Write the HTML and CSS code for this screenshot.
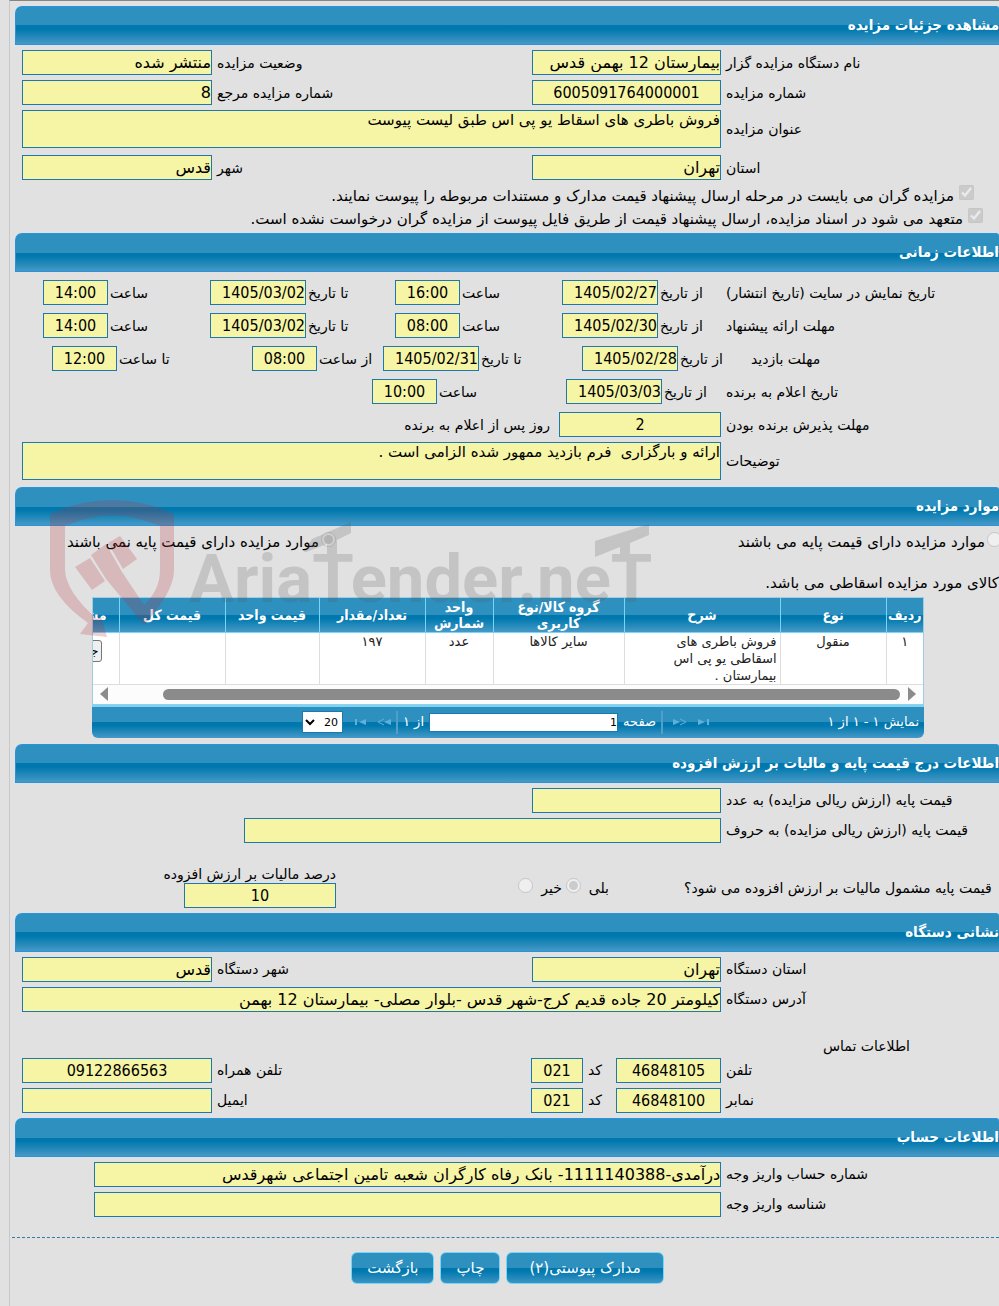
FILE: index.html
```
<!DOCTYPE html>
<html lang="fa" dir="rtl">
<head>
    <meta charset="UTF-8">
    <meta name="viewport" content="width=device-width, initial-scale=1.0">
    <title>مشاهده جزئیات مزایده</title>
    <link rel="stylesheet" href="styles.css">
</head>
<body>
<form class="page">

    <h2 class="head">مشاهده جزئیات مزایده</h2>
    <div class="section">
        <div class="row">
            <label for="org">نام دستگاه مزایده گزار</label>
            <input type="text" class="input" id="org" value="بیمارستان 12 بهمن قدس" readonly>
            <label for="status">وضعیت مزایده</label>
            <input type="text" class="input" id="status" value="منتشر شده" readonly>
        </div>
        <div class="row">
            <label for="number">شماره مزایده</label>
            <input type="text" class="input num" id="number" value="6005091764000001" readonly>
            <label for="ref">شماره مزایده مرجع</label>
            <input type="text" class="input" id="ref" value="8" readonly>
        </div>
        <div class="row row-wide row-subject">
            <label for="subject">عنوان مزایده</label>
            <textarea class="input area" id="subject" readonly>فروش باطری های اسقاط یو پی اس طبق لیست پیوست</textarea>
        </div>
        <div class="row">
            <label for="province">استان</label>
            <input type="text" class="input" id="province" value="تهران" readonly>
            <label for="city">شهر</label>
            <input type="text" class="input" id="city" value="قدس" readonly>
        </div>
        <div class="checks">
            <div class="check">
                <input type="checkbox" id="docs" checked disabled>
                <label for="docs">مزایده گران می بایست در مرحله ارسال پیشنهاد قیمت مدارک و مستندات مربوطه را پیوست نمایند.</label>
            </div>
            <div class="check check-2">
                <input type="checkbox" id="commit" checked disabled>
                <label for="commit">متعهد می شود در اسناد مزایده، ارسال پیشنهاد قیمت از طریق فایل پیوست از مزایده گران درخواست نشده است.</label>
            </div>
        </div>
    </div>

    <h2 class="head">اطلاعات زمانی</h2>
    <div class="section times">
        <div class="time-row">
            <span class="time-title">تاریخ نمایش در سایت (تاریخ انتشار)</span>
            <div class="field"><label for="d1">از تاریخ</label><input type="text" class="input date" id="d1" value="1405/02/27" readonly></div>
            <div class="field"><label for="h1">ساعت</label><input type="text" class="input hour" id="h1" value="16:00" readonly></div>
            <div class="field"><label for="d2">تا تاریخ</label><input type="text" class="input date" id="d2" value="1405/03/02" readonly></div>
            <div class="field"><label for="h2">ساعت</label><input type="text" class="input hour" id="h2" value="14:00" readonly></div>
        </div>
        <div class="time-row">
            <span class="time-title">مهلت ارائه پیشنهاد</span>
            <div class="field"><label for="d3">از تاریخ</label><input type="text" class="input date" id="d3" value="1405/02/30" readonly></div>
            <div class="field"><label for="h3">ساعت</label><input type="text" class="input hour" id="h3" value="08:00" readonly></div>
            <div class="field"><label for="d4">تا تاریخ</label><input type="text" class="input date" id="d4" value="1405/03/02" readonly></div>
            <div class="field"><label for="h4">ساعت</label><input type="text" class="input hour" id="h4" value="14:00" readonly></div>
        </div>
        <div class="time-row visit">
            <span class="time-title">مهلت بازدید</span>
            <div class="field"><label for="d5">از تاریخ</label><input type="text" class="input date" id="d5" value="1405/02/28" readonly></div>
            <div class="field"><label for="d6">تا تاریخ</label><input type="text" class="input date" id="d6" value="1405/02/31" readonly></div>
            <div class="field"><label for="h5">از ساعت</label><input type="text" class="input hour" id="h5" value="08:00" readonly></div>
            <div class="field"><label for="h6">تا ساعت</label><input type="text" class="input hour" id="h6" value="12:00" readonly></div>
        </div>
        <div class="time-row winner">
            <span class="time-title">تاریخ اعلام به برنده</span>
            <div class="field"><label for="d7">از تاریخ</label><input type="text" class="input date" id="d7" value="1405/03/03" readonly></div>
            <div class="field"><label for="h7">ساعت</label><input type="text" class="input hour" id="h7" value="10:00" readonly></div>
        </div>
        <div class="row accept">
            <label for="days">مهلت پذیرش برنده بودن</label>
            <input type="text" class="input num" id="days" value="2" readonly>
            <span>روز پس از اعلام به برنده</span>
        </div>
        <div class="row row-wide">
            <label for="notes">توضیحات</label>
            <textarea class="input area" id="notes" readonly>ارائه و بارگزاری  فرم بازدید ممهور شده الزامی است .</textarea>
        </div>
    </div>

    <h2 class="head">موارد مزایده</h2>
    <div class="section items">
        <svg class="watermark" width="610" height="140" viewBox="0 0 610 140">
            <path fill="#b5303c" opacity="0.23" d="M41 55L56 44L72 72L94 105Q110 90 110 70V26Q62 5 15 26V70Q16 92 47 119L51 116L57 137L30 134L38 123Q0 96 0 70V14Q62 -14 124 14V70Q124 92 94 125L56 79ZM25 67L40 58L55 81L42 90ZM58 43L70 36L87 59L73 69Z"/>
            <g class="wordmark">
                <path d="M254 52L262 39L301 22V33L287 40V60H277V44L256 52ZM545 41L599 24V35L580 43V60H570V47L545 57Z"/>
                <text x="139" y="102">AriaTender.neT</text>
            </g>
        </svg>
        <div class="base-price">
            <div class="radio"><input type="radio" name="base" id="base-yes" disabled><label for="base-yes">موارد مزایده دارای قیمت پایه می باشند</label></div>
            <div class="radio"><input type="radio" name="base" id="base-no" checked disabled><label for="base-no">موارد مزایده دارای قیمت پایه نمی باشند</label></div>
        </div>
        <p class="scrap">کالای مورد مزایده اسقاطی می باشد.</p>

        <div class="grid">
            <div class="grid-view">
                <table>
                    <colgroup>
                        <col class="w-row"><col class="w-kind"><col class="w-desc"><col class="w-group"><col class="w-unit"><col class="w-count"><col class="w-price"><col class="w-total"><col class="w-view">
                    </colgroup>
                    <thead>
                        <tr>
                            <th>ردیف</th>
                            <th>نوع</th>
                            <th>شرح</th>
                            <th class="group">گروه کالا/نوع کاربری</th>
                            <th>واحد شمارش</th>
                            <th>تعداد/مقدار</th>
                            <th>قیمت واحد</th>
                            <th>قیمت کل</th>
                            <th class="view">مشاهده</th>
                        </tr>
                    </thead>
                    <tbody>
                        <tr>
                            <td>۱</td>
                            <td>منقول</td>
                            <td class="desc">فروش باطری های اسقاطی یو پی اس بیمارستان .</td>
                            <td>سایر کالاها</td>
                            <td>عدد</td>
                            <td>۱۹۷</td>
                            <td></td>
                            <td></td>
                            <td class="view"><button type="button" class="details">جزئیات</button></td>
                        </tr>
                    </tbody>
                </table>
            </div>
            <div class="scroll">
                <svg width="8" height="14" viewBox="0 0 8 14"><path d="M0 0L8 7L0 14Z" fill="#8b8b8b"/></svg>
                <div class="thumb"></div>
                <svg width="8" height="14" viewBox="0 0 8 14"><path d="M8 0L0 7L8 14Z" fill="#8b8b8b"/></svg>
            </div>
            <div class="pager">
                <span class="pager-info">نمایش ۱ - ۱ از ۱</span>
                <div class="pager-nav">
                    <svg width="14" height="8" viewBox="0 0 14 8"><path d="M1 1L8 4L1 7ZM10 1H12V7H10Z" fill="#5fb0dc"/></svg>
                    <svg width="14" height="8" viewBox="0 0 14 8"><path d="M0 1L7 4L0 7Z" fill="#5fb0dc"/><path d="M7 1L13 4L7 7" fill="none" stroke="#5fb0dc"/></svg>
                    <i class="sep"></i>
                    <label for="page">صفحه</label>
                    <input type="text" class="page-no" id="page" value="1">
                    <span>از ۱</span>
                    <i class="sep"></i>
                    <svg width="14" height="8" viewBox="0 0 14 8"><path d="M14 1L7 4L14 7Z" fill="#5fb0dc"/><path d="M7 1L1 4L7 7" fill="none" stroke="#5fb0dc"/></svg>
                    <svg width="14" height="8" viewBox="0 0 14 8"><path d="M13 1L6 4L13 7ZM2 1H4V7H2Z" fill="#5fb0dc"/></svg>
                    <select class="page-size" aria-label="صفحه"><option>20</option></select>
                </div>
            </div>
        </div>
    </div>

    <h2 class="head">اطلاعات درج قیمت پایه و مالیات بر ارزش افزوده</h2>
    <div class="section">
        <div class="row">
            <label for="price">قیمت پایه (ارزش ریالی مزایده) به عدد</label>
            <input type="text" class="input" id="price" readonly>
        </div>
        <div class="row row-words">
            <label for="words">قیمت پایه (ارزش ریالی مزایده) به حروف</label>
            <input type="text" class="input" id="words" readonly>
        </div>
        <div class="vat">
            <span class="vat-title">قیمت پایه مشمول مالیات بر ارزش افزوده می شود؟</span>
            <div class="vat-radios">
                <label for="vat-yes">بلی</label>
                <input type="radio" name="vat" id="vat-yes" checked disabled>
                <label for="vat-no">خیر</label>
                <input type="radio" name="vat" id="vat-no" disabled>
            </div>
            <div class="vat-rate">
                <label for="rate">درصد مالیات بر ارزش افزوده</label>
                <input type="text" class="input num" id="rate" value="10" readonly>
            </div>
        </div>
    </div>

    <h2 class="head">نشانی دستگاه</h2>
    <div class="section">
        <div class="row">
            <label for="org-province">استان دستگاه</label>
            <input type="text" class="input" id="org-province" value="تهران" readonly>
            <label for="org-city">شهر دستگاه</label>
            <input type="text" class="input" id="org-city" value="قدس" readonly>
        </div>
        <div class="row row-wide">
            <label for="address">آدرس دستگاه</label>
            <input type="text" class="input" id="address" value="کیلومتر 20 جاده قدیم کرج-شهر قدس -بلوار مصلی- بیمارستان 12 بهمن" readonly>
        </div>
        <p class="contact">اطلاعات تماس</p>
        <div class="row phone">
            <label for="tel">تلفن</label>
            <input type="text" class="input num" id="tel" value="46848105" readonly>
            <label for="tel-code">کد</label>
            <input type="text" class="input num" id="tel-code" value="021" readonly>
            <label for="mobile">تلفن همراه</label>
            <input type="text" class="input num" id="mobile" value="09122866563" readonly>
        </div>
        <div class="row phone">
            <label for="fax">نمابر</label>
            <input type="text" class="input num" id="fax" value="46848100" readonly>
            <label for="fax-code">کد</label>
            <input type="text" class="input num" id="fax-code" value="021" readonly>
            <label for="email">ایمیل</label>
            <input type="text" class="input" id="email" readonly>
        </div>
    </div>

    <h2 class="head">اطلاعات حساب</h2>
    <div class="section">
        <div class="row row-account">
            <label for="account">شماره حساب واریز وجه</label>
            <input type="text" class="input" id="account" value="درآمدی-1111140388- بانک رفاه کارگران شعبه تامین اجتماعی شهرقدس" readonly>
        </div>
        <div class="row row-account">
            <label for="deposit">شناسه واریز وجه</label>
            <input type="text" class="input" id="deposit" readonly>
        </div>
    </div>

    <div class="actions">
        <button type="button" class="btn btn-wide">مدارک پیوستی(۲)</button>
        <button type="button" class="btn">چاپ</button>
        <button type="button" class="btn">بازگشت</button>
    </div>
</form>
</body>
</html>
```

FILE: styles.css
```
*{
    box-sizing: border-box;
}
body{
    margin: 0;
    padding-left: 9px;
    background-color: #e1e1e1;
    font-family: "DejaVu Sans", sans-serif;
    font-size: 14px;
    line-height: 20px;
    color: #000;
    overflow-x: hidden;
}
input, textarea, select, button{
    font-family: inherit;
    margin: 0;
}
p{
    margin: 0;
}
.page{
    min-height: 100vh;
    padding-top: 5px;
    border-top: 1px solid #858585;
    border-left: 1px solid #c8c8c8;
}
.head{
    height: 39px;
    margin: 0 0 0 5px;
    border: 1px solid #2a93dd;
    border-right: 0;
    border-radius: 7px 3px 0 0;
    background: linear-gradient(#2e90bf 0, #2e90bf 50%, #0078ae 50%, #0078ae 60%, #4699c6 100%);
    color: #fff;
    font-family: "DejaVu Sans Condensed", "DejaVu Sans", sans-serif;
    font-size: 15px;
    line-height: 37px;
}
.section{
    display: flex;
    flex-direction: column;
    gap: 5px;
    margin-left: 5px;
    padding: 5px 0 5px 7px;
}
.row{
    display: grid;
    grid-template-columns: 273px 189px 1fr 190px;
    column-gap: 5px;
    align-items: center;
    min-height: 25px;
}
.row label, .time-title{
    text-align: left;
    white-space: nowrap;
}
.row-wide{
    grid-template-columns: 273px 1fr;
}
.row-subject{
    margin-bottom: 2px;
}
.row-words{
    grid-template-columns: 273px 477px;
}
.row-account{
    grid-template-columns: 273px 627px;
}
.phone{
    grid-template-columns: 273px 105px 23px 52px 1fr 190px;
}
.input{
    width: 100%;
    height: 25px;
    padding: 0;
    border: 1px solid #1c78ad;
    border-radius: 0;
    background-color: #f6f4a5;
    color: #000;
    font-size: 16px;
}
.num, .date, .hour{
    font-family: "DejaVu Sans Condensed", "DejaVu Sans", sans-serif;
    text-align: center;
    direction: ltr;
}
.area{
    display: block;
    height: 38px;
    font-size: 15px;
    line-height: 18px;
    resize: none;
    overflow: hidden;
    white-space: pre-wrap;
}

.checks{
    margin: -1px 0 -2px;
}
.check{
    display: flex;
    align-items: center;
    gap: 5px;
    height: 23px;
    padding-right: 25px;
    font-size: 15px;
}
.check-2{
    padding-right: 16px;
}
.check input, .radio input, .vat-radios input{
    width: 15px;
    height: 15px;
    flex: none;
    margin-bottom: 6px;
}
.check label, .radio label{
    white-space: nowrap;
}

.times{
    padding-top: 8px;
    padding-bottom: 7px;
}
.time-row{
    display: grid;
    grid-template-columns: 273px 159px 162px 180px 1fr;
    column-gap: 5px;
    align-items: center;
    margin-bottom: 3px;
    padding-left: 21px;
}
.visit{
    grid-template-columns: 248px 164px 194px 126px 1fr;
    padding-left: 30px;
}
.winner{
    grid-template-columns: 273px 155px 189px;
}
.field{
    display: flex;
    justify-content: flex-end;
    align-items: center;
    gap: 2px;
    white-space: nowrap;
}
.date{
    width: 96px;
    text-align: right;
}
.hour{
    width: 65px;
}
.accept{
    grid-template-columns: 273px 162px 1fr;
    column-gap: 5px;
}
.accept span{
    padding-right: 4px;
}

.items{
    position: relative;
    gap: 0;
    padding: 3px 0 6px;
}
.watermark{
    position: absolute;
    top: -26px;
    left: 35px;
    z-index: 2;
    pointer-events: none;
}
.wordmark{
    font-family: Roboto, sans-serif;
    font-size: 67px;
    font-weight: bold;
    fill: #555;
    opacity: 0.2;
    direction: ltr;
}
.base-price{
    display: grid;
    grid-template-columns: 666px 1fr;
    height: 26px;
    margin-right: -3px;
    font-size: 15px;
}
.radio{
    display: flex;
    align-items: center;
    gap: 2px;
}
.scrap{
    margin-top: 18px;
    height: 24px;
    font-size: 15px;
}
.grid{
    margin: 0 75px 0 77px;
}
.grid-view{
    overflow: hidden;
    border: 1px solid #9fcbe3;
    border-bottom: 0;
    background-color: #fff;
}
.grid table{
    width: 865px;
    table-layout: fixed;
    border-collapse: collapse;
}
.w-row{ width: 37px; }
.w-kind{ width: 106px; }
.w-desc{ width: 156px; }
.w-group{ width: 131px; }
.w-unit{ width: 68px; }
.w-count{ width: 106px; }
.w-price{ width: 94px; }
.w-total{ width: 106px; }
.w-view{ width: 61px; }
.grid th{
    height: 34px;
    padding: 0;
    border-left: 1px solid #77d5f7;
    border-bottom: 1px solid #77d5f7;
    background: linear-gradient(#2e90bf 0, #2e90bf 50%, #0078ae 50%, #0078ae 60%, #4699c6 100%);
    color: #fff;
    font-family: "DejaVu Sans Condensed", "DejaVu Sans", sans-serif;
    font-size: 14px;
    line-height: 16px;
}
.grid .group{
    padding: 0 15px;
}
.grid td{
    height: 52px;
    padding: 0 3px;
    border-left: 1px solid #ddd;
    border-bottom: 1px solid #ddd;
    color: #222;
    font-size: 13px;
    line-height: 17px;
    text-align: center;
    vertical-align: top;
}
.grid .desc{
    padding-left: 30px;
    text-align: right;
}
.grid .view{
    padding-right: 12px;
    text-align: right;
}
.grid td.view{
    padding: 7px 17px 0 0;
}
.details{
    height: 22px;
    padding: 0 2px;
    border: 1px solid #767676;
    border-radius: 3px;
    background-color: #efefef;
    font-size: 13px;
}
.scroll{
    display: flex;
    align-items: center;
    gap: 8px;
    height: 20px;
    padding: 0 7px;
    border: 1px solid #9fcbe3;
    border-top: 0;
    background-color: #fcfcfc;
}
.thumb{
    flex: 1;
    height: 11px;
    margin-left: 47px;
    border-radius: 6px;
    background-color: #8b8b8b;
}
.pager{
    display: flex;
    align-items: center;
    height: 33px;
    padding: 0 5px;
    border-top: 2px solid #77d5f7;
    border-radius: 0 0 6px 6px;
    background: linear-gradient(#2e90bf 0, #2e90bf 50%, #0078ae 50%, #0078ae 60%, #4699c6 100%);
    color: #fff;
    font-size: 13px;
}
.pager-info{
    width: 208px;
}
.pager-nav{
    display: flex;
    align-items: center;
    gap: 5px;
}
.pager-nav svg{
    margin-left: 5px;
}
.sep{
    width: 2px;
    height: 23px;
    background-color: #4f9fca;
}
.page-no{
    width: 189px;
    height: 19px;
    padding: 0;
    border: 1px solid #1c78ad;
    background-color: #fff;
    font-size: 11px;
}
.page-size{
    width: 41px;
    height: 22px;
    padding: 0;
    border: 1px solid #1c78ad;
    border-radius: 0;
    background-color: #fff;
    font-size: 11px;
}

.vat{
    display: flex;
    align-items: flex-start;
    margin-top: 18px;
    height: 42px;
    white-space: nowrap;
}
.vat-title{
    width: 315px;
    margin-top: 12px;
    text-align: left;
}
.vat-radios{
    display: flex;
    gap: 8px;
    width: 200px;
    margin-top: 12px;
    padding-right: 75px;
}
.vat-radios input{
    margin-left: -4px;
}
.vat-rate{
    display: flex;
    flex-direction: column;
    width: 152px;
    margin-right: 148px;
}
.vat-rate label{
    line-height: 17px;
}
.contact{
    height: 17px;
    margin-top: 19px;
    padding-right: 89px;
}

.actions{
    display: flex;
    justify-content: center;
    gap: 6px;
    margin: 15px 0 0 2px;
    padding: 14px 0 22px 4px;
    border-top: 1px dashed #2f7fa5;
}
.btn{
    height: 32px;
    padding: 0 15px;
    border: 1px solid #77d5f7;
    border-radius: 6px;
    background: linear-gradient(#2e90bf 0, #2e90bf 50%, #0078ae 50%, #0078ae 60%, #3d94c3 100%);
    color: #fff;
    font-size: 15px;
}
.btn-wide{
    padding: 0 22px;
}
```
